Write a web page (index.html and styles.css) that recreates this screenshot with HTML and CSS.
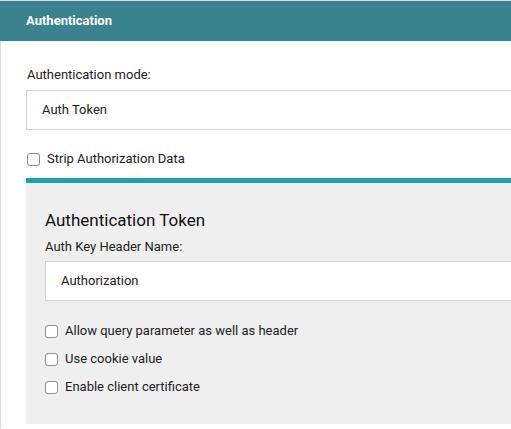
FILE: index.html
```html
<!DOCTYPE html>
<html>
<head>
<meta charset="utf-8">
<link rel="stylesheet" href="styles.css">
</head>
<body>
<div class="card">
  <div class="card-header">Authentication</div>
  <div class="card-body">
    <div class="field-label mode-label">Authentication mode:</div>
    <div class="select">Auth Token</div>
    <label class="check strip"><span class="box"></span>Strip Authorization Data</label>
    <div class="panel">
      <div class="panel-title">Authentication Token</div>
      <div class="field-label key-label">Auth Key Header Name:</div>
      <div class="input">Authorization</div>
      <div class="checks">
        <label class="check"><span class="box"></span>Allow query parameter as well as header</label>
        <label class="check"><span class="box"></span>Use cookie value</label>
        <label class="check"><span class="box"></span>Enable client certificate</label>
      </div>
    </div>
  </div>
</div>
</body>
</html>
```
FILE: styles.css
```css
html, body {
  margin: 0;
  padding: 0;
  background: #fff;
}
body {
  font-family: Roboto, "Liberation Sans", sans-serif;
  color: #222;
  font-size: 13px;
}
.card {
  border-top: 1px solid #dcdcdc;
  border-left: 1px solid #dcdcdc;
  min-height: 428px;
  box-sizing: border-box;
}
.card-header {
  background: #3a838e;
  color: #fff;
  font-weight: 700;
  font-size: 13px;
  height: 40px;
  line-height: 40px;
  padding-left: 26px;
  margin-left: -1px;
}
.card-body {
  padding-left: 25px;
}
.field-label {
  line-height: 16px;
}
.mode-label {
  padding-top: 26px;
  padding-left: 1px;
}
.select, .input {
  background: #fff;
  border: 1px solid #d2d2d2;
  border-right: none;
  height: 38px;
  line-height: 38px;
  padding-left: 15px;
}
.select {
  margin-top: 7px;
}
.check {
  display: flex;
  align-items: center;
  line-height: 16px;
  height: 16px;
}
.box {
  width: 11px;
  height: 11px;
  border: 1px solid #8e8e8e;
  border-radius: 3px;
  background: #fff;
  margin-right: 7px;
  flex: none;
}
.strip {
  margin-top: 21px;
  padding-left: 1px;
}
.panel {
  margin-top: 11px;
  border-top: 5px solid #1fa0ad;
  background: #efefef;
  padding: 27px 0 29px 19px;
}
.panel-title {
  font-size: 17px;
  line-height: 20px;
  color: #111;
}
.key-label {
  margin-top: 9px;
}
.input {
  margin-top: 6px;
}
.checks {
  margin-top: 22px;
  display: flex;
  flex-direction: column;
  gap: 12px;
}
```
